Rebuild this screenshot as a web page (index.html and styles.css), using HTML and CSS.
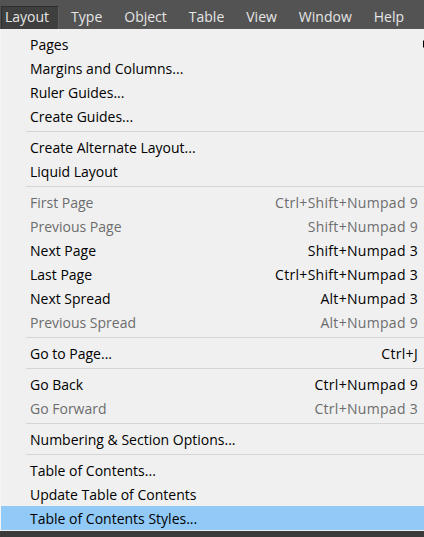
FILE: index.html
```html
<!DOCTYPE html>
<html>
<head>
<meta charset="utf-8">
<link rel="stylesheet" href="styles.css">
</head>
<body>
<div class="menubar">
  <div class="top active">Layout</div>
  <div class="top">Type</div>
  <div class="top">Object</div>
  <div class="top">Table</div>
  <div class="top">View</div>
  <div class="top">Window</div>
  <div class="top">Help</div>
</div>
<div class="menu">
  <div class="row"><span class="label">Pages</span><span class="arrow"></span></div>
  <div class="row"><span class="label">Margins and Columns...</span></div>
  <div class="row"><span class="label">Ruler Guides...</span></div>
  <div class="row"><span class="label">Create Guides...</span></div>
  <div class="sep"></div>
  <div class="row"><span class="label">Create Alternate Layout...</span></div>
  <div class="row"><span class="label">Liquid Layout</span></div>
  <div class="sep"></div>
  <div class="row disabled"><span class="label">First Page</span><span class="key">Ctrl+Shift+Numpad 9</span></div>
  <div class="row disabled"><span class="label">Previous Page</span><span class="key">Shift+Numpad 9</span></div>
  <div class="row"><span class="label">Next Page</span><span class="key">Shift+Numpad 3</span></div>
  <div class="row"><span class="label">Last Page</span><span class="key">Ctrl+Shift+Numpad 3</span></div>
  <div class="row"><span class="label">Next Spread</span><span class="key">Alt+Numpad 3</span></div>
  <div class="row disabled"><span class="label">Previous Spread</span><span class="key">Alt+Numpad 9</span></div>
  <div class="sep"></div>
  <div class="row"><span class="label">Go to Page...</span><span class="key">Ctrl+J</span></div>
  <div class="sep"></div>
  <div class="row"><span class="label">Go Back</span><span class="key">Ctrl+Numpad 9</span></div>
  <div class="row disabled"><span class="label">Go Forward</span><span class="key">Ctrl+Numpad 3</span></div>
  <div class="sep"></div>
  <div class="row"><span class="label">Numbering &amp; Section Options...</span></div>
  <div class="sep"></div>
  <div class="row"><span class="label">Table of Contents...</span></div>
  <div class="row"><span class="label">Update Table of Contents</span></div>
  <div class="row hover"><span class="label">Table of Contents Styles...</span></div>
</div>
</body>
</html>
```

FILE: styles.css
```css
html, body {
  margin: 0;
  padding: 0;
}
body {
  width: 424px;
  height: 537px;
  overflow: hidden;
  background: #3a3a3a;
  font-family: "Open Sans", "Noto Sans", sans-serif;
  font-size: 14px;
}
.menubar {
  height: 29px;
  background: #535353;
  display: flex;
  align-items: flex-end;
  padding-left: 1px;
}
.top {
  height: 23px;
  line-height: 20px;
  padding: 0 10px 0 3px;
  margin-right: 7px;
  color: #e6e6e6;
  box-sizing: border-box;
  border: 1px solid transparent;
  border-bottom: none;
  font-size: 14px;
}
.top.active {
  background: #3f3f3f;
  border-color: #2e2e2e;
  border-right-color: #5e5e5e;
  padding: 0 9px 0 3px;
  margin-right: 8px;
}
.menu {
  background: #f0f0f0;
  padding: 3px 0 1px 0;
  border-left: 1px solid #f5f5f5;
}
.row {
  height: 24px;
  display: flex;
  align-items: center;
  justify-content: space-between;
  padding: 0 6px 0 29px;
  color: #000;
  position: relative;
}
.row.disabled {
  color: #6d6d6d;
}
.row.hover {
  background: #91c9f7;
}
.key {
  text-align: right;
  letter-spacing: 0.3px;
}
.arrow {
  position: absolute;
  right: -3px;
  top: 8px;
  width: 0;
  height: 0;
  border-top: 4px solid transparent;
  border-bottom: 4px solid transparent;
  border-left: 4px solid #000;
}
.sep {
  height: 7px;
  display: flex;
  align-items: center;
  padding-left: 25px;
}
.sep::before {
  content: "";
  display: block;
  width: 100%;
  height: 1px;
  background: #d5d5d5;
  margin-top: -1px;
}
```
